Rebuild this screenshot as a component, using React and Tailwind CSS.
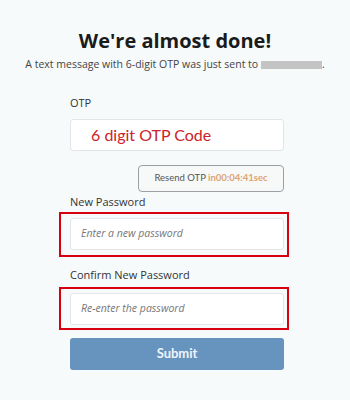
export default function App() {
  return (
    <div className="w-[350px] h-[400px] bg-[#f6fafb] font-['Open_Sans',sans-serif] overflow-hidden">
      <div className="pt-[27px] text-center">
        <h1 className="text-[20px] leading-[28px] font-bold text-[#1b1b1b]">We're almost done!</h1>
        <p className="mt-[2px] text-[10.5px] leading-[14px] text-[#444]">
          A text message with 6-digit OTP was just sent to{" "}
          <span className="inline-block w-[61px] h-[8px] bg-[#c4c4c4] align-middle" />.
        </p>
      </div>

      <div className="w-[214px] ml-[70px] mt-[25px]">
        <label className="block text-[11px] leading-[14px] text-[#333]">OTP</label>
        <div className="mt-[9px] h-[32px] bg-white border border-[#e2e6e8] rounded-[3px] flex items-center pl-[20px]">
          <span className="font-['Lato',sans-serif] text-[16px] text-[#cc2229]">6 digit OTP Code</span>
        </div>

        <div className="mt-[14px] flex justify-end">
          <button className="w-[146px] h-[27px] bg-[#f7f8f8] border border-[#9aa0a4] rounded-[4px] text-[9.5px] text-[#555] font-['Lato',sans-serif]">
            Resend OTP <span className="font-bold text-[#dba572]">in00:04:41sec</span>
          </button>
        </div>

        <label className="block mt-[3px] text-[11px] leading-[14px] text-[#333]">New Password</label>
      </div>

      <div className="ml-[59px] mt-[3px] w-[230px] h-[45px] border-2 border-[#d8000f] pl-[9px] pr-[3px] pt-[4px]">
        <div className="h-[32px] bg-white border border-[#e2e6e8] rounded-[3px] flex items-center pl-[10px]">
          <span className="italic text-[10.5px] text-[#777]">Enter a new password</span>
        </div>
      </div>

      <label className="block ml-[70px] mt-[11px] text-[11px] leading-[14px] text-[#333]">Confirm New Password</label>

      <div className="ml-[59px] mt-[5px] w-[230px] h-[43px] border-2 border-[#d8000f] pl-[9px] pr-[3px] pt-[4px]">
        <div className="h-[32px] bg-white border border-[#e2e6e8] rounded-[3px] flex items-center pl-[10px]">
          <span className="italic text-[10.5px] text-[#777]">Re-enter the password</span>
        </div>
      </div>

      <button className="block ml-[70px] mt-[8px] w-[214px] h-[32px] bg-[#6694bf] rounded-[3px] text-[13px] font-bold text-[#eef4fa] font-['Lato',sans-serif]">
        Submit
      </button>
    </div>
  );
}
